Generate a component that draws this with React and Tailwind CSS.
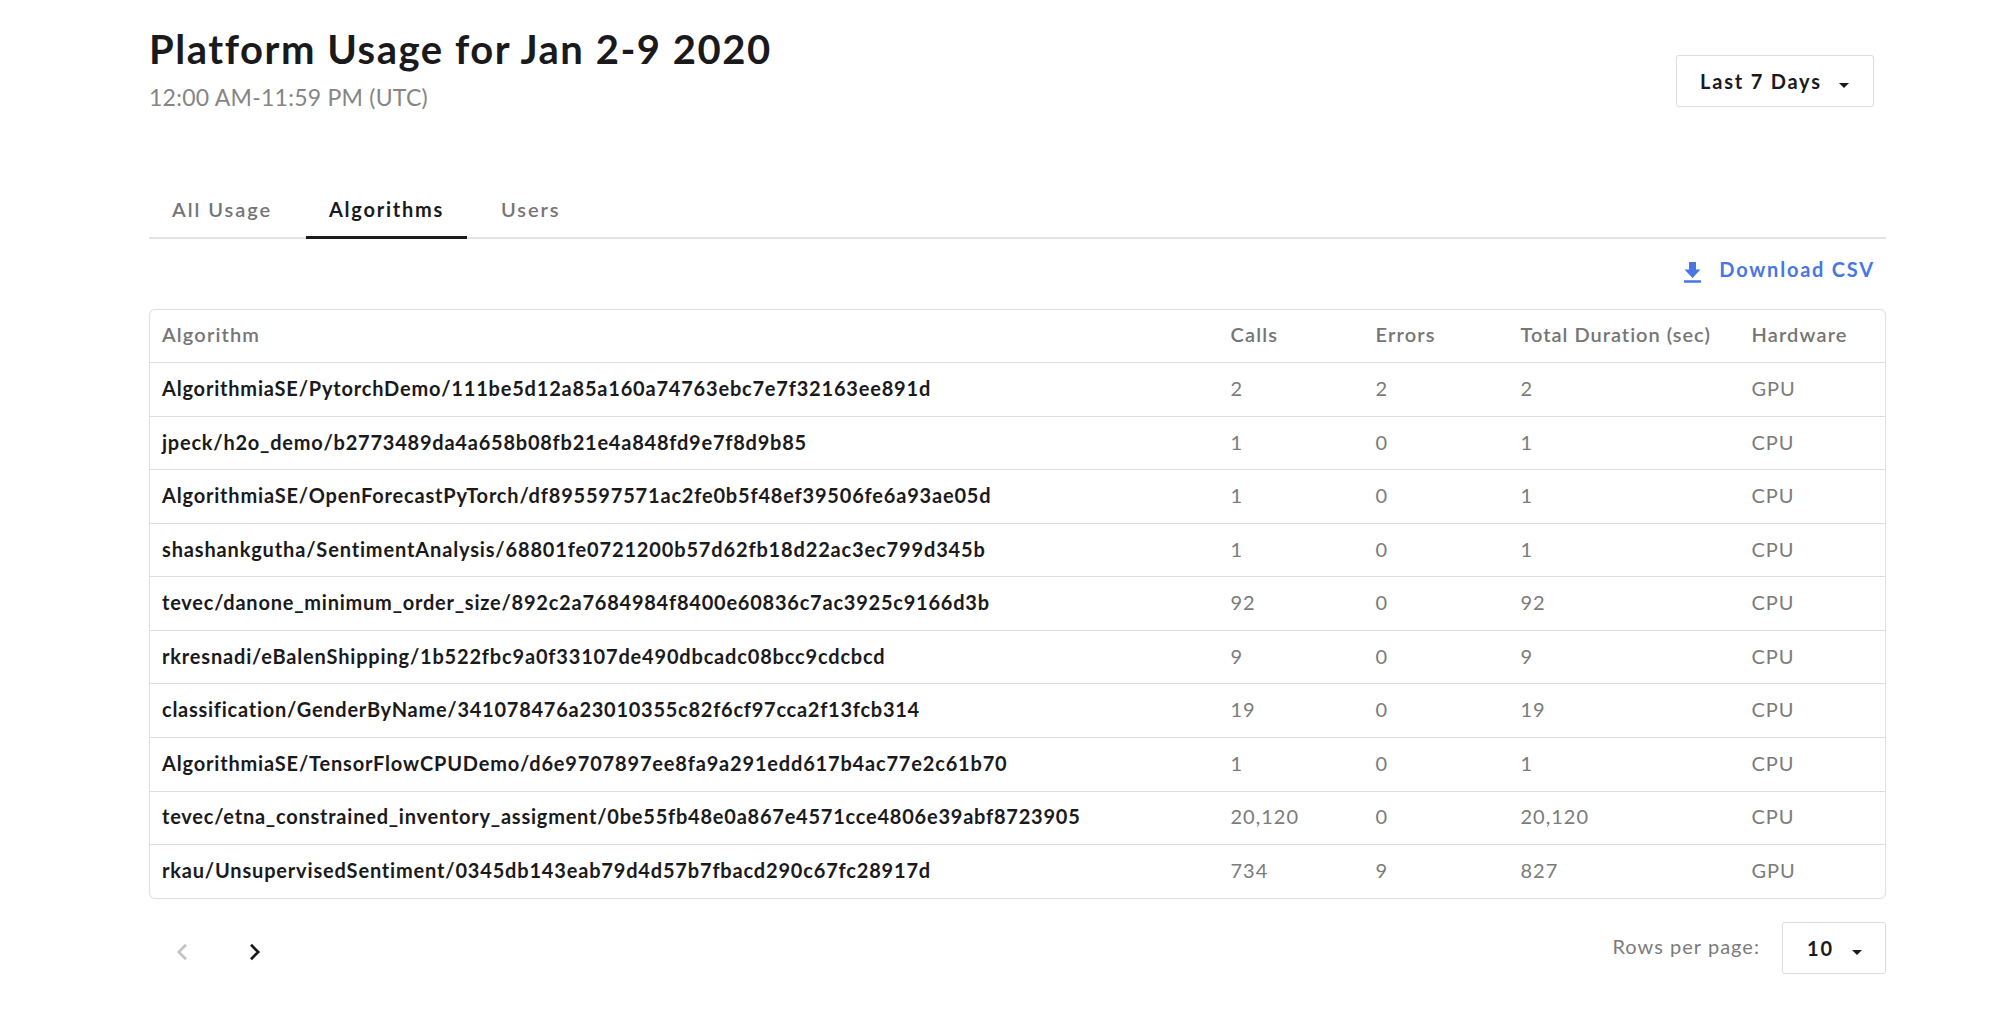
const rows = [
  { name: "AlgorithmiaSE/PytorchDemo/111be5d12a85a160a74763ebc7e7f32163ee891d", calls: "2", errors: "2", duration: "2", hardware: "GPU", tracking: "tracking-[0.8px]" },
  { name: "jpeck/h2o_demo/b2773489da4a658b08fb21e4a848fd9e7f8d9b85", calls: "1", errors: "0", duration: "1", hardware: "CPU", tracking: "tracking-[0.77px]" },
  { name: "AlgorithmiaSE/OpenForecastPyTorch/df895597571ac2fe0b5f48ef39506fe6a93ae05d", calls: "1", errors: "0", duration: "1", hardware: "CPU", tracking: "tracking-[0.81px]" },
  { name: "shashankgutha/SentimentAnalysis/68801fe0721200b57d62fb18d22ac3ec799d345b", calls: "1", errors: "0", duration: "1", hardware: "CPU", tracking: "tracking-[0.85px]" },
  { name: "tevec/danone_minimum_order_size/892c2a7684984f8400e60836c7ac3925c9166d3b", calls: "92", errors: "0", duration: "92", hardware: "CPU", tracking: "tracking-[0.77px]" },
  { name: "rkresnadi/eBalenShipping/1b522fbc9a0f33107de490dbcadc08bcc9cdcbcd", calls: "9", errors: "0", duration: "9", hardware: "CPU", tracking: "tracking-[0.82px]" },
  { name: "classification/GenderByName/341078476a23010355c82f6cf97cca2f13fcb314", calls: "19", errors: "0", duration: "19", hardware: "CPU", tracking: "tracking-[0.74px]" },
  { name: "AlgorithmiaSE/TensorFlowCPUDemo/d6e9707897ee8fa9a291edd617b4ac77e2c61b70", calls: "1", errors: "0", duration: "1", hardware: "CPU", tracking: "tracking-[0.82px]" },
  { name: "tevec/etna_constrained_inventory_assigment/0be55fb48e0a867e4571cce4806e39abf8723905", calls: "20,120", errors: "0", duration: "20,120", hardware: "CPU", tracking: "tracking-[0.77px]" },
  { name: "rkau/UnsupervisedSentiment/0345db143eab79d4d57b7fbacd290c67fc28917d", calls: "734", errors: "9", duration: "827", hardware: "GPU", tracking: "tracking-[0.82px]" },
];

const columns = "grid grid-cols-[1068.5px_145px_145px_231px_1fr] items-center pl-[12px] pb-[3px]";

function Caret() {
  return (
    <svg className="h-[5px] w-[10px] shrink-0" viewBox="0 0 10 5" fill="currentColor">
      <path d="M0 0h10L5 5z" />
    </svg>
  );
}

function Chevron({ flip, className }) {
  return (
    <button className={className}>
      <svg className="h-[18px] w-[12px]" viewBox="0 0 12 18" fill="none" stroke="currentColor" strokeWidth="2.7">
        <path d={flip ? "M10 1.8 2.8 9l7.2 7.2" : "M2 1.8 9.2 9 2 16.2"} />
      </svg>
    </button>
  );
}

function Tab({ label, active }) {
  return (
    <button
      className={
        active
          ? "-mb-[2px] h-[53px] w-[161px] border-b-[3px] border-[#1a1a1c] pb-[4px] pl-[23px] text-left font-bold tracking-[1.75px] text-[#1a1a1c]"
          : "h-[51px] w-[157px] pb-[5px] pl-[23px] text-left font-semibold tracking-[1.95px] text-[#757575]"
      }
    >
      {label}
    </button>
  );
}

export default function App() {
  return (
    <main className="h-[1033px] w-[1999px] overflow-hidden bg-white pl-[149px] pr-[113px] pt-[25px] font-['Lato',sans-serif] text-[20px] leading-[26px] text-[#1a1a1c]">
      <header className="flex h-[163px] justify-between pr-[12px]">
        <div>
          <h1 className="text-[40px] font-bold leading-[48px] tracking-[1.53px]">Platform Usage for Jan 2-9 2020</h1>
          <p className="mt-[9px] text-[23px] leading-[30px] tracking-[0.25px] text-[#858585]">12:00 AM-11:59 PM (UTC)</p>
        </div>
        <button className="mt-[30px] flex h-[52px] w-[198px] items-center rounded-[3px] border border-[#dedede] pl-[23px] shadow-[0_0_1px_#dedede]">
          <span className="w-[139px] pb-px text-left font-bold tracking-[1.8px]">Last 7 Days</span>
          <span className="pt-[9px]"><Caret /></span>
        </button>
      </header>

      <nav className="flex h-[51px] items-end border-b-2 border-[#e4e4e4]">
        <Tab label="All Usage" />
        <Tab label="Algorithms" active />
        <div className="pl-[11px]"><Tab label="Users" /></div>
      </nav>

      <div className="flex h-[69.5px] items-start justify-end pr-[11px] pt-[17px] text-[#4876e3]">
        <button className="flex items-start">
          <svg className="mr-[18px] mt-[6px] h-[21px] w-[17px]" viewBox="0 0 17 21" fill="currentColor">
            <path d="M5 0h7v7.5h4.5L8.5 16 .5 7.5H5zM0 18.3h17v2.4H0z" />
          </svg>
          <span className="font-bold tracking-[1.78px]">Download CSV</span>
        </button>
      </div>

      <section className="rounded-[6px] border border-[#e0e0e0] shadow-[0_0_1px_#e0e0e0]">
        <div className={`${columns} h-[52.7px] font-semibold tracking-[1.15px] text-[#757575]`}>
          <span>Algorithm</span>
          <span>Calls</span>
          <span>Errors</span>
          <span className="tracking-[1px]">Total Duration (sec)</span>
          <span>Hardware</span>
        </div>
        {rows.map((row) => (
          <div key={row.name} className={`${columns} h-[53.55px] border-t border-[#dedede] tracking-[1px] text-[#7b7b7b]`}>
            <span className={`${row.tracking} font-bold text-[#1a1a1c]`}>{row.name}</span>
            <span>{row.calls}</span>
            <span>{row.errors}</span>
            <span>{row.duration}</span>
            <span>{row.hardware}</span>
          </div>
        ))}
      </section>

      <footer className="flex items-start justify-between pt-[23.5px]">
        <div className="flex pl-[27px] pt-[21px]">
          <Chevron flip className="mr-[61px] flex text-[#c4c4c4]" />
          <Chevron className="flex text-[#1a1a1c]" />
        </div>
        <div className="flex">
          <span className="mr-[22px] mt-[11px] tracking-[1.03px] text-[#7b7b7b]">Rows per page:</span>
          <button className="flex h-[52px] w-[104px] items-center rounded-[3px] border border-[#dedede] pl-[24px] shadow-[0_0_1px_#dedede]">
            <span className="w-[45px] text-left font-bold tracking-[1.8px]">10</span>
            <span className="pt-[9px]"><Caret /></span>
          </button>
        </div>
      </footer>
    </main>
  );
}
